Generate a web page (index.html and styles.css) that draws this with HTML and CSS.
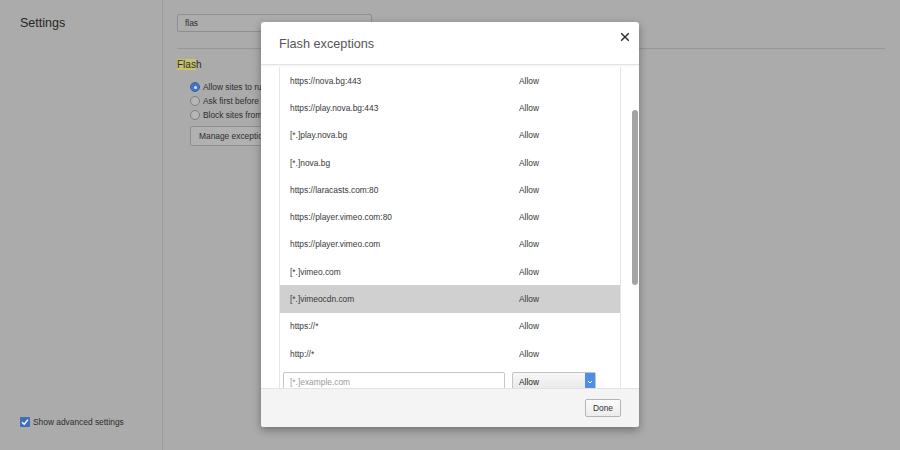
FILE: index.html
```html
<!DOCTYPE html>
<html lang="en">
<head>
    <meta charset="UTF-8">
    <meta name="viewport" content="width=device-width, initial-scale=1.0">
    <title>Settings - Flash exceptions</title>
    <link rel="stylesheet" href="styles.css">
</head>
<body>
    <div class="sidebar">
        <h1>Settings</h1>
        <label class="advanced">
            <span class="checkbox">
                <svg width="10" height="10" viewBox="0 0 10 10"><path d="M2 5.2 L4.2 7.3 L8 2.6" fill="none" stroke="#fff" stroke-width="1.4"/></svg>
            </span>
            Show advanced settings
        </label>
    </div>

    <div class="main">
        <div class="search">
            <span>flas</span>
            <span class="clear">&times;</span>
        </div>
        <hr>
        <h2><mark>Flas</mark>h</h2>
        <div class="options">
            <div class="option"><span class="radio on"></span><span class="label">Allow sites to run Flash</span></div>
            <div class="option"><span class="radio"></span><span class="label">Ask first before allowing sites to run Flash (recommended)</span></div>
            <div class="option"><span class="radio"></span><span class="label">Block sites from running Flash</span></div>
        </div>
        <button class="manage">Manage exceptions...</button>
    </div>

    <div class="dialog">
        <div class="dialog-header">
            <h3>Flash exceptions</h3>
            <svg class="close" width="10" height="10" viewBox="0 0 10 10"><path d="M1.2 1.2 L8.8 8.8 M8.8 1.2 L1.2 8.8" stroke="#2a2a2a" stroke-width="1.4"/></svg>
        </div>

        <div class="dialog-body">
            <div class="list">
                <div class="row"><span class="site">https://nova.bg:443</span><span>Allow</span></div>
                <div class="row"><span class="site">https://play.nova.bg:443</span><span>Allow</span></div>
                <div class="row"><span class="site">[*.]play.nova.bg</span><span>Allow</span></div>
                <div class="row"><span class="site">[*.]nova.bg</span><span>Allow</span></div>
                <div class="row"><span class="site">https://laracasts.com:80</span><span>Allow</span></div>
                <div class="row"><span class="site">https://player.vimeo.com:80</span><span>Allow</span></div>
                <div class="row"><span class="site">https://player.vimeo.com</span><span>Allow</span></div>
                <div class="row"><span class="site">[*.]vimeo.com</span><span>Allow</span></div>
                <div class="row selected"><span class="site">[*.]vimeocdn.com</span><span>Allow</span></div>
                <div class="row"><span class="site">https://*</span><span>Allow</span></div>
                <div class="row"><span class="site">http://*</span><span>Allow</span></div>
                <div class="row new">
                    <input type="text" placeholder="[*.]example.com">
                    <div class="select">
                        <span>Allow</span>
                        <span class="arrow">
                            <svg width="6" height="4" viewBox="0 0 6 4"><path d="M1 1 L3 3 L5 1" fill="none" stroke="#fff" stroke-width="1"/></svg>
                        </span>
                    </div>
                </div>
            </div>
            <div class="thumb"></div>
        </div>

        <div class="dialog-footer">
            <button class="done">Done</button>
        </div>
    </div>
</body>
</html>
```

FILE: styles.css
```css
body {
    margin: 0;
    height: 450px;
    overflow: hidden;
    display: flex;
    background-color: #aaabaa;
    font-family: "Liberation Sans", Arial, sans-serif;
    font-size: 8.4px;
    color: #2e2e2e;
}

/* left column */
.sidebar {
    width: 163px;
    box-sizing: border-box;
    border-right: 1px solid #9b9c9b;
    padding: 16px 0 23px 20px;
    display: flex;
    flex-direction: column;
    justify-content: space-between;
}
h1 {
    margin: 0;
    font-size: 12.5px;
    line-height: 15px;
    font-weight: normal;
    color: #252525;
}
.advanced {
    display: flex;
    align-items: center;
    height: 10px;
    white-space: nowrap;
}
.checkbox {
    width: 10px;
    height: 10px;
    margin-right: 3px;
    border-radius: 1px;
    background-color: #3f70b6;
    display: flex;
}

/* settings column */
.main {
    flex: 1;
    padding: 14px 15px 0 14px;
}
.search {
    width: 195px;
    height: 18px;
    box-sizing: border-box;
    border: 1px solid #8e8f8e;
    border-radius: 2px;
    background-color: #acadac;
    padding: 0 5px 0 7px;
    display: flex;
    align-items: center;
    justify-content: space-between;
}
.search .clear {
    font-size: 7px;
    color: #555;
}
hr {
    margin: 16px 0 0;
    border: 0;
    border-top: 1px solid #959695;
}
h2 {
    margin: 8.5px 0 0;
    font-size: 10px;
    line-height: 13px;
    font-weight: normal;
}
mark {
    background-color: #c8c36a;
    color: inherit;
}
.options {
    margin: 9.5px 0 0 13px;
}
.option {
    display: flex;
    align-items: center;
    height: 14px;
    white-space: nowrap;
}
/* the dialog hides the rest of these labels */
.option .label {
    width: 58px;
    overflow: hidden;
}
.radio {
    width: 8px;
    height: 8px;
    border: 1px solid #7f807f;
    border-radius: 50%;
    background-color: #b5b6b5;
    margin-right: 3px;
    display: flex;
    align-items: center;
    justify-content: center;
}
.radio.on {
    background-color: #4377c2;
    border-color: #3564a8;
}
.radio.on::after {
    content: "";
    width: 3px;
    height: 3px;
    border-radius: 50%;
    background-color: #dce6f4;
}
.manage {
    margin: 4px 0 0 13px;
    width: 90px;
    height: 20px;
    padding: 0 8px;
    border: 1px solid #8d8e8d;
    border-radius: 2px;
    background-color: #b0b1b0;
    font-family: inherit;
    font-size: 8.4px;
    color: #2e2e2e;
    text-align: left;
    white-space: nowrap;
    overflow: hidden;
}

/* exceptions dialog */
.dialog {
    position: absolute;
    left: 261px;
    top: 22px;
    width: 378px;
    height: 405px;
    background-color: white;
    border-radius: 3px;
    box-shadow: 0 3px 8px rgba(0,0,0,0.35);
    display: flex;
    flex-direction: column;
    overflow: hidden;
}
.dialog-header {
    height: 42px;
    flex-shrink: 0;
    border-bottom: 1px solid #e3e3e3;
    box-shadow: 0 1px 2px rgba(0,0,0,0.06);
    padding-left: 18px;
    display: flex;
    align-items: center;
}
.dialog-header h3 {
    flex: 1;
    margin: 2px 0 0;
    font-size: 12.7px;
    font-weight: normal;
    color: #565656;
}
.close {
    align-self: flex-start;
    margin: 10px 9px 0 0;
}
.dialog-body {
    flex: 1;
    position: relative;
    overflow: hidden;
    padding: 2px 18px 0;
}
.list {
    height: 400px;
    border-left: 1px solid #e5e5e5;
    border-right: 1px solid #e5e5e5;
}
.row {
    height: 27.3px;
    padding-left: 10px;
    display: flex;
    align-items: center;
    color: #383838;
}
.row .site {
    width: 229px;
}
.row.selected {
    background-color: #d0d0d0;
}
.row.new {
    padding: 4.5px 0 0 3px;
    align-items: flex-start;
}
.row.new input {
    width: 222px;
    height: 20px;
    box-sizing: border-box;
    border: 1px solid #c6c6c6;
    border-radius: 2px;
    padding: 0 6px;
    font-family: inherit;
    font-size: 8.4px;
}
.row.new input::placeholder {
    color: #9b9b9b;
}
.select {
    width: 84px;
    height: 20px;
    box-sizing: border-box;
    margin-left: 7px;
    border: 1px solid #c4c4c4;
    border-radius: 2px;
    background: linear-gradient(#f7f7f7, #e8e8e8);
    padding-left: 6px;
    display: flex;
    align-items: center;
    justify-content: space-between;
    color: #222;
}
.select .arrow {
    width: 10px;
    height: 100%;
    background-color: #4d8fe4;
    display: flex;
    align-items: center;
    justify-content: center;
}
.thumb {
    position: absolute;
    right: 1px;
    top: 45px;
    width: 6px;
    height: 175px;
    border-radius: 3px;
    background-color: #a4a4a4;
}
.dialog-footer {
    height: 39px;
    flex-shrink: 0;
    box-sizing: border-box;
    border-top: 1px solid #e2e2e2;
    background-color: #f4f4f4;
    padding: 10px 18px 0 0;
    display: flex;
    justify-content: flex-end;
    align-items: flex-start;
}
.done {
    height: 18px;
    padding: 0 7px;
    border: 1px solid #b4b4b4;
    border-radius: 2px;
    background: linear-gradient(#fbfbfb, #ececec);
    font-family: inherit;
    font-size: 8.4px;
    color: #333;
}
```
